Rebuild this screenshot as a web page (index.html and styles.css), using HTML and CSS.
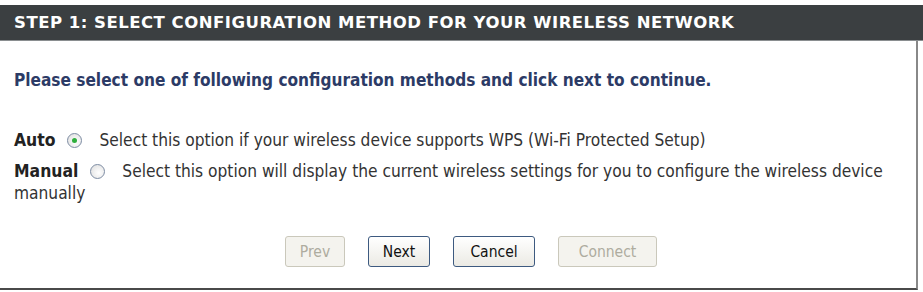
FILE: index.html
```html
<!DOCTYPE html>
<html>
<head>
<meta charset="utf-8">
<link rel="stylesheet" href="styles.css">
</head>
<body>
<div class="box">
  <div class="head">STEP 1: SELECT CONFIGURATION METHOD FOR YOUR WIRELESS NETWORK</div>
  <div class="body">
    <p class="intro">Please select one of following configuration methods and click next to continue.</p>
    <p class="opt first"><b>Auto</b><span class="radio on"></span><span>Select this option if your wireless device supports WPS (Wi-Fi Protected Setup)</span></p>
    <p class="opt"><b>Manual</b><span class="radio"></span><span>Select this option will display the current wireless settings for you to configure the wireless device</span> <span>manually</span></p>
    <div class="btns">
      <button class="btn dis b1">Prev</button>
      <button class="btn b2">Next</button>
      <button class="btn b3">Cancel</button>
      <button class="btn dis b4">Connect</button>
    </div>
  </div>
</div>
</body>
</html>
```
FILE: styles.css
```css
html, body { margin: 0; padding: 0; background: #fff; }
body { font-family: "DejaVu Sans Condensed", "DejaVu Sans", sans-serif; font-size: 17.2px; color: #333; }
.box { width: 923px; height: 292px; padding-top: 5px; box-sizing: border-box; }
.head {
  background: #3b3f41; color: #fff; height: 36px; box-sizing: border-box;
  font-family: "DejaVu Sans", sans-serif; font-weight: bold; font-size: 16.5px;
  padding-left: 14px; line-height: 35px; border-bottom: 1px solid #8a8e90;
  letter-spacing: 0.5px;
}
.body {
  height: 249px; box-sizing: border-box; width: 918px;
  border-right: 2px solid #888; border-bottom: 2px solid #4a4a4a; padding: 29px 0 0 14px;
}
.intro { margin: 0; font-weight: bold; color: #2c3b66; font-size: 17.1px; line-height: 21px; }
.opt { margin: 9px 0 0; line-height: 22px; }
.opt.first { margin-top: 38px; }
.opt b { color: #222; font-size: 17.4px; }
.radio {
  display: inline-block; vertical-align: -2px;
  width: 13px; height: 13px; border: 1px solid #7d8ca3; border-radius: 50%;
  margin: 0 17px 0 12px; background: radial-gradient(circle at 60% 60%, #fff 0, #dcdcdc 100%); position: relative;
}
.radio.on::after {
  content: ""; position: absolute; left: 4px; top: 4px; width: 5px; height: 5px; border-radius: 50%;
  background: #2fae3d;
}
.btns { display: flex; gap: 23px; margin-top: 32px; padding-left: 271px; }
.btn {
  font-family: "DejaVu Sans Condensed", sans-serif; font-size: 15.5px; height: 31px;
  border: 1px solid #3d5a80; border-radius: 3px; background: linear-gradient(#fff, #ebeae4);
  color: #111; padding: 0;
}
.b1 { width: 60px; } .b2 { width: 62px; } .b3 { width: 82px; } .b4 { width: 99px; }
.btn.dis { border-color: #cac8bb; color: #aeac9f; background: #f4f3ee; }
```
